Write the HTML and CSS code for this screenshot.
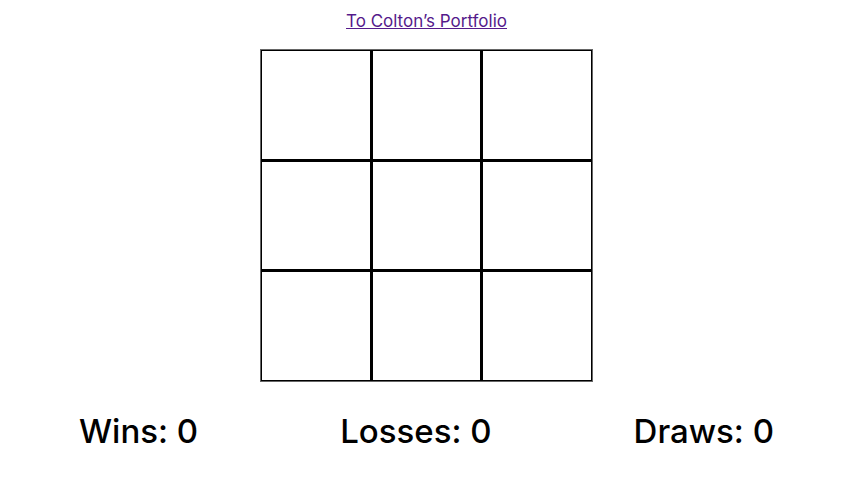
FILE: index.html
```html
<!DOCTYPE html>
<html>
<head>
<meta charset="utf-8">
<link rel="stylesheet" href="styles.css">
</head>
<body>
<div class="top">
  <a class="portfolio" href="#">To Colton’s Portfolio</a>
</div>
<div class="board">
  <div class="cell"></div><div class="cell"></div><div class="cell"></div>
  <div class="cell"></div><div class="cell"></div><div class="cell"></div>
  <div class="cell"></div><div class="cell"></div><div class="cell"></div>
</div>
<div class="stats">
  <div class="stat">Wins: 0</div>
  <div class="stat">Losses: 0</div>
  <div class="stat">Draws: 0</div>
</div>
</body>
</html>
```
FILE: styles.css
```css
body {
  margin: 8px;
  font-family: "Inter", "Liberation Sans", sans-serif;
  background: #fff;
  color: #000;
}
.top {
  text-align: center;
  padding-top: 3px;
  height: 38px;
}
.portfolio {
  color: #551a8b;
  font-size: 17px;
  text-decoration: underline;
}
.board {
  width: 333px;
  height: 333px;
  margin: 0 auto;
  box-sizing: border-box;
  border: 1px solid #666;
  background: #000;
  display: grid;
  grid-template-columns: repeat(3, 1fr);
  grid-template-rows: repeat(3, 1fr);
  gap: 1px;
}
.cell {
  background: #fff;
  border: 1px solid #000;
}
.stats {
  display: flex;
  justify-content: space-around;
  margin-top: 29px;
}
.stat {
  font-size: 33px;
  font-weight: 500;
}
```
